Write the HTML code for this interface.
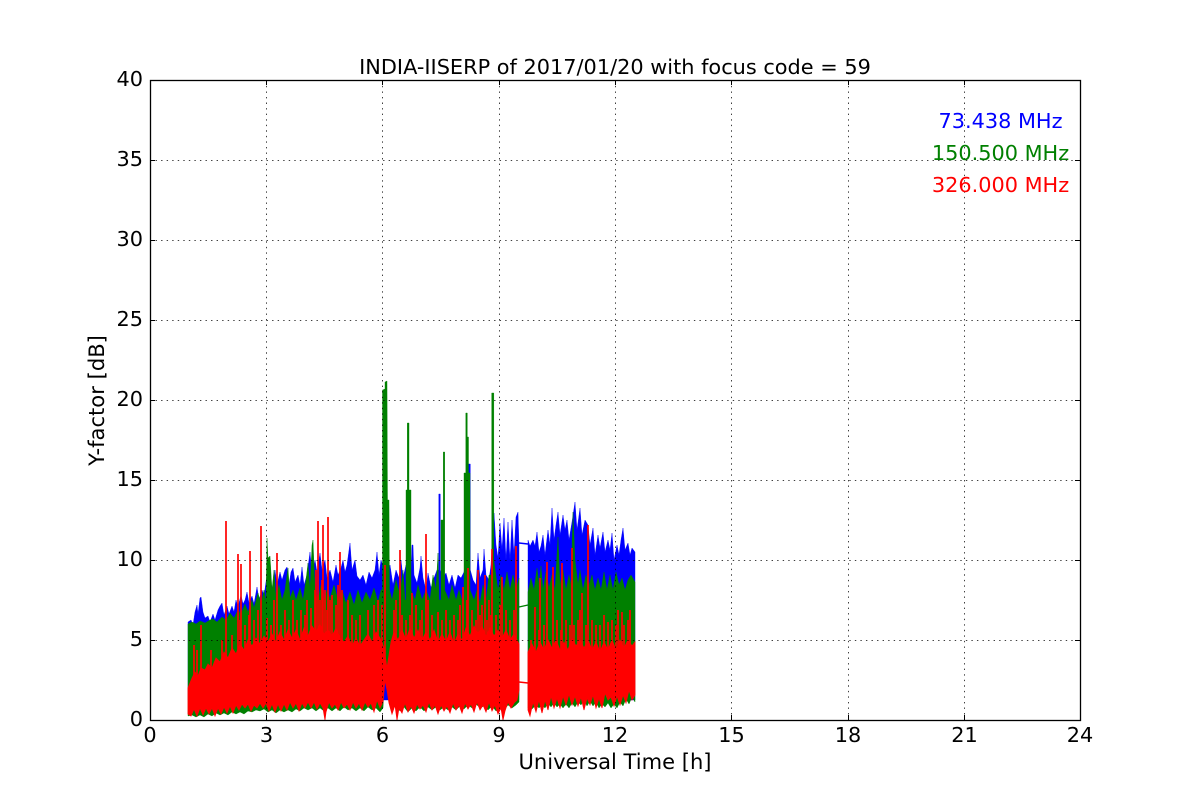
<!DOCTYPE html>
<html>
<head>
<meta charset="utf-8">
<style>
html,body{margin:0;padding:0;background:#fff;width:1200px;height:800px;overflow:hidden}
svg{display:block}
text{font-family:"DejaVu Sans",sans-serif;font-size:20.83px;fill:#000}
</style>
</head>
<body>
<svg width="1200" height="800" viewBox="0 0 1200 800" xmlns="http://www.w3.org/2000/svg">
<rect width="1200" height="800" fill="#fff"/>

<!-- gap connectors -->
<path d="M519 543L528 544" stroke="#00f" stroke-width="1.4" fill="none"/>
<path d="M519 607L528 605" stroke="#008000" stroke-width="1.4" fill="none"/>
<path d="M519 682L528 683" stroke="#f00" stroke-width="1.4" fill="none"/>

<!-- blue -->
<path fill="#00f" stroke="#00f" stroke-width=".4" d="M188 700V622L191 620 193 625 195 612 197 605 198 614 200 598 201 597 203 612 205 618 208 616 210 622 213 614 215 620 218 610 220 606 222 603 224 615 227 606 229 614 232 606 234 612 236 600 238 607 241 595 243 604 245 600 247 592 249 603 252 596 254 604 257 587 259 600 262 590 264 596 267 575 268 590 271 584 273 590 275 570 277 585 280 572 282 580 285 570 287 567 289 585 291 572 293 568 295 582 298 575 300 585 302 567 304 585 307 575 310 552 312 575 315 560 317 572 320 553 322 570 325 560 327 578 330 570 333 582 336 565 338 575 341 568 343 560 345 572 347 565 350 543 352 570 355 560 357 576 360 580 363 575 366 585 369 572 372 578 375 570 377 552 379 575 381 560 384 570 387 575 390 565 393 585 396 570 399 578 401 560 403 578 406 565 409 570 411 570 412 545 413 545 414 575 417 583 420 568 421 556 423 578 426 590 428 573 431 588 434 578 437 570 438.8 570 438.8 494 440.3 494 440.3 570 443 578 446 573 449 585 452 575 455 588 458 575 461 578 464 572 466 560 468.3 560 468.3 464 470.3 464 470.3 570 473 580 476 585 478 553 480 578 483 570 484 549 486 575 489 580 491 565 494 513 496 545 498 558 500 523 502 550 504 518 506 560 508 522 510 560 512 520 514 555 516 517 518 512 519 545V700Z"/>
<path fill="#00f" stroke="#00f" stroke-width=".4" d="M528 700V540L530 546 533 540 535 546 537 532 539 552 541 546 543 535 545 555 548 530 550 545 552 508 554 540 556 525 558 512 560 535 563 515 565 530 567 520 569 540 572 522 575 502 577 530 580 508 582 535 585 520 588 525 590 545 593 528 595 555 598 535 600 548 603 532 605 552 608 540 610 550 612 533 614 560 617 545 619 555 621 540 623 528 625 550 628 543 630 555 632 548 635 552V700Z"/>

<!-- green -->
<path fill="#008000" stroke="#008000" stroke-width=".4" d="M188 716V624L192 622 196 624 200 621 205 623 210 620 213 619 217 622 222 617 226 620 230 613 234 618 238 610 241 614 245 604 248 612 252 600 254 608 258 593 261 604 264 590 266 602 267 538 268 558 270 556 272 590 274 570 276 598 279 585 282 600 285 590 288 568 290 598 293 590 296 600 300 588 303 600 306 580 308 563 310 590 312 545 313 540 315 590 318 600 321 585 324 600 327 590 330 598 334 585 338 600 342 590 346 603 350 592 354 605 358 590 362 603 366 592 370 600 374 588 378 602 381 590 382.5 590 382.5 390 385 389 385 382 387 381 387.5 500 389 500 389.5 590 392 600 396 580 400 595 403 570 405 600 406 600 406 490 407.3 490 407.3 423 409 423 409 490 411 490 411 590 415 600 418 585 422 600 426 590 430 600 433 575 436 590 438 553 439 600 441 600 441 520 443.3 520 443.3 452 444.7 452 444.7 590 449 600 452 585 456 600 459 590 462 600 464 600 464 473 465.8 473 465.8 413 467.3 413 467.3 437 468.5 437 468.5 473 470 473 470 590 474 600 477 590 480 603 483 585 486 600 489 575 491.7 575 491.7 393 493.8 393 493.8 560 498 590 501 575 504 590 507 572 510 590 513 575 516 590 519 578V702L516 705 512 708 508 705 504 710 500 707 496 711 492 706 488 710 484 706 480 708 476 704 472 708 468 705 464 709 460 706 456 710 452 707 448 710 444 707 440 710 436 707 432 710 428 707 424 711 420 707 416 711 412 708 408 712 404 707 400 711 396 706 392 709 389 695 387 675 385 672 383 708 380 712 376 708 372 710 368 707 364 711 360 708 356 711 352 708 348 710 344 707 340 711 336 708 332 711 328 708 324 711 320 708 316 711 312 708 308 710 304 708 300 711 296 709 292 712 288 710 284 712 280 710 276 713 272 710 268 712 264 709 260 711 256 710 252 712 248 711 244 714 240 712 236 714 232 712 228 715 224 713 220 715 216 713 212 716 208 714 204 717 200 715 196 717 192 715Z"/>
<path fill="#008000" stroke="#008000" stroke-width=".4" d="M528 708V592L531 578 534 590 537 568 539 585 541 566 543 590 546 572 549 588 552 575 555 590 558 537 560 585 563 570 566 590 569 575 571 585 573 512 575 560 578 585 580 570 583 590 586 575 589 585 592 575 595 590 598 578 601 590 604 572 607 590 610 575 613 590 616 572 619 585 622 578 625 590 628 580 631 575 635 582V702L632 697 629 704 626 699 623 706 620 702 617 708 614 704 611 708 608 703 605 707 602 704 599 708 596 702 593 706 590 701 587 706 584 700 581 705 578 702 575 707 572 703 569 708 566 704 563 708 560 704 557 707 554 703 551 707 548 703 545 708 542 705 539 708 536 705 532 709Z"/>

<!-- red mass -->
<path fill="#f00" stroke="#f00" stroke-width=".8" d="M188 714V688L192 678 195 672 198 676 201 668 205 670 208 664 212 668 216 658 220 662 224 652 228 658 232 648 236 654 240 644 244 650 248 640 252 646 256 638 260 644 264 636 268 642 272 634 276 642 280 632 284 640 288 630 292 638 296 630 300 640 304 628 308 636 312 626 316 632 320 624 324 634 328 630 332 636 336 628 340 638 344 642 348 636 352 646 356 638 360 646 364 640 368 634 372 642 376 632 380 638 384 648 387 668 391 642 394 632 398 640 402 630 406 640 410 628 414 638 418 630 422 640 426 632 430 640 434 630 438 642 442 634 446 642 450 632 454 644 458 634 462 640 466 628 470 636 474 626 478 634 482 626 486 636 490 628 494 636 498 630 502 638 506 630 510 640 514 634 519 644V690L517 700 514 703 511 708 508 702 505 711 503 720 501 708 498 714 495 705 492 711 489 702 486 712 483 705 480 710 477 702 474 712 471 704 468 709 465 703 462 713 459 705 456 710 453 703 450 713 447 706 444 711 441 705 438 714 435 705 432 710 429 702 426 712 423 705 420 709 417 704 414 713 411 706 408 712 405 703 402 713 399 708 397 720 395 705 392 714 389 703 387 690 385 680 383 702 380 708 377 700 374 712 371 703 368 707 365 702 362 710 359 703 356 708 353 702 350 710 347 704 344 708 341 702 338 710 335 704 332 708 329 702 326 712 325 720 323 708 320 703 317 709 314 702 311 708 308 702 305 708 302 703 299 711 296 703 293 708 290 702 287 710 284 704 281 711 278 704 275 712 272 704 269 711 266 703 263 708 260 703 257 708 254 705 251 711 248 704 245 708 242 704 239 710 236 705 233 713 230 706 227 713 224 707 221 714 218 708 215 716 212 708 209 714 206 708 203 715 200 708 197 716 194 709 191 716Z"/>
<path fill="#f00" stroke="#f00" stroke-width=".8" d="M528 710V652L532 644 536 652 540 642 544 650 548 640 552 648 556 640 560 650 564 642 568 650 572 638 576 646 580 640 584 648 588 640 592 650 596 642 600 652 604 642 608 650 612 640 616 650 620 640 624 648 628 640 632 646 635 642V695L632 700 629 690 626 703 623 695 620 705 617 696 614 706 611 697 608 700 605 693 602 708 599 698 596 708 593 695 590 705 587 698 584 710 581 697 578 706 575 696 572 705 569 694 566 705 563 696 560 708 557 698 554 708 551 696 548 710 545 700 542 713 539 700 536 712 533 702 530 716Z"/>

<!-- red spikes (only the ones rising above the mass) -->
<path fill="none" stroke="#f00" stroke-width="1.7" d="M194 690V645M197 690V650M201 690V625M211 690V650M222 690V640M226 690V521M232 690V635M238 690V554M240 690V620M241 690V564M245 690V625M249 690V615M250 690V551M254 690V620M258 690V610M261 690V526M267 690V618M271 690V625M274 690V600M277 690V553M281 690V625M285 690V610M289 690V620M293 690V600M297 690V620M301 690V610M305 690V615M307 690V600M311 690V608M315 690V590M316 690V570M318 690V521M320 690V600M322 690V580M323 690V525M325 690V590M327 690V610M328 690V517M330 690V600M332 690V595M336 690V605M338 690V585M340 690V552M342 690V590M348 690V600M352 690V615M356 690V620M360 690V615M368 690V610M374 690V605M378 690V600M382 690V605M385 670V565"/>
<path fill="none" stroke="#f00" stroke-width="1.7" d="M394 690V610M396 690V600M400 690V550M402 690V615M406 690V620M410 690V615M412 690V593M416 690V605M420 690V620M422 690V610M426 690V534M428 690V600M432 690V615M438 690V612M442 690V620M446 690V610M450 690V620M454 690V615M458 690V620M460 690V605M463 690V587M467 690V600M468 690V568M472 690V610M476 690V620M478 690V570M480 690V615M482 690V605M485 690V575M487 690V620M489 690V600M491 690V615M492 690V549M496 690V615M500 690V605M502 690V577M506 690V610M510 690V620M514 690V610M516 690V546"/>
<path fill="none" stroke="#f00" stroke-width="1.7" d="M531 690V640M535 690V607M539 690V630M540 690V578M544 690V625M547 690V562M553 690V567M557 690V620M561 690V630M562 690V563M566 690V620M570 690V625M572 690V548M574 690V625M578 690V620M580 690V610M582 690V593M586 690V625M588 690V525M592 690V620M596 690V625M600 690V625M604 690V615M608 690V622M612 690V620M616 690V625M618 690V610M622 690V612M624 690V625M628 690V620M630 690V610"/>

<!-- grid -->
<g stroke="#000" stroke-width=".75" stroke-dasharray="1.4 4.15" fill="none">
<path d="M266.5 720V80M382.5 720V80M499.5 720V80M615.5 720V80M731.5 720V80M848.5 720V80M964.5 720V80"/>
<path d="M150 640.5H1080M150 560.5H1080M150 480.5H1080M150 400.5H1080M150 320.5H1080M150 240.5H1080M150 160.5H1080"/>
</g>

<!-- ticks -->
<g stroke="#000" stroke-width="1" fill="none">
<path d="M266.5 720v-5M382.5 720v-5M499.5 720v-5M615.5 720v-5M731.5 720v-5M848.5 720v-5M964.5 720v-5"/>
<path d="M266.5 80v5M382.5 80v5M499.5 80v5M615.5 80v5M731.5 80v5M848.5 80v5M964.5 80v5"/>
<path d="M150 640.5h5M150 560.5h5M150 480.5h5M150 400.5h5M150 320.5h5M150 240.5h5M150 160.5h5"/>
<path d="M1080 640.5h-5M1080 560.5h-5M1080 480.5h-5M1080 400.5h-5M1080 320.5h-5M1080 240.5h-5M1080 160.5h-5"/>
</g>

<!-- frame -->
<rect x="150.5" y="80.5" width="930" height="640" fill="none" stroke="#000" stroke-width="1.3"/>

<!-- title and labels -->
<text x="615" y="74" text-anchor="middle" style="font-size:20.85px">INDIA-IISERP of 2017/01/20 with focus code = 59</text>
<text x="615" y="769" text-anchor="middle" style="font-size:21.05px">Universal Time [h]</text>
<text transform="translate(104 400.5) rotate(-90)" text-anchor="middle" style="font-size:21.1px">Y-factor [dB]</text>

<!-- x ticks -->
<g text-anchor="middle">
<text x="150" y="742">0</text>
<text x="266.5" y="742">3</text>
<text x="382.5" y="742">6</text>
<text x="499" y="742">9</text>
<text x="615" y="742">12</text>
<text x="731.5" y="742">15</text>
<text x="848" y="742">18</text>
<text x="964.5" y="742">21</text>
<text x="1080" y="742">24</text>
</g>

<!-- y ticks -->
<g text-anchor="end">
<text x="143" y="726">0</text>
<text x="143" y="646">5</text>
<text x="143" y="566">10</text>
<text x="143" y="486">15</text>
<text x="143" y="406">20</text>
<text x="143" y="326">25</text>
<text x="143" y="246">30</text>
<text x="143" y="166">35</text>
<text x="143" y="86">40</text>
</g>

<!-- legend -->
<g text-anchor="middle">
<text x="1000.5" y="128" style="fill:#00f">73.438 MHz</text>
<text x="1000.5" y="160" style="fill:#008000">150.500 MHz</text>
<text x="1000.5" y="192" style="fill:#f00">326.000 MHz</text>
</g>
</svg>
</body>
</html>
